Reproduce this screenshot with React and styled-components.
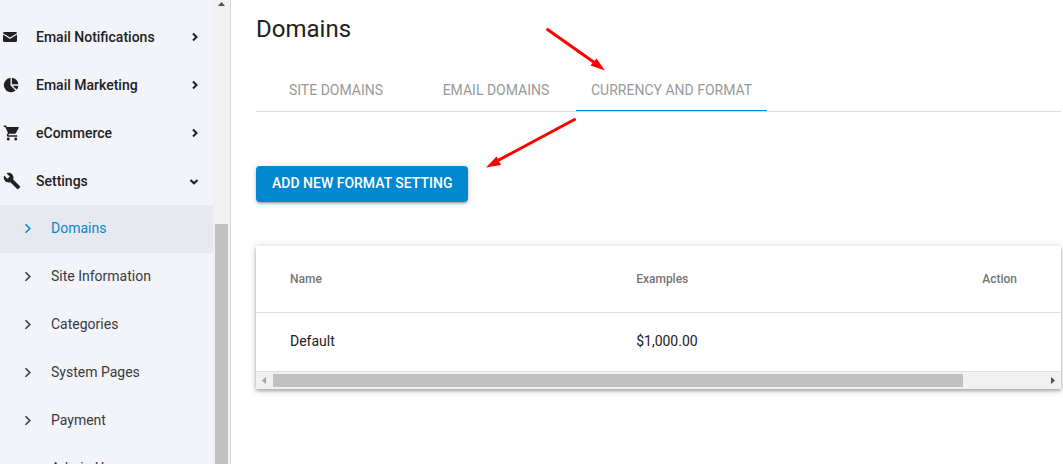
import React from "react";
import styled, { createGlobalStyle } from "styled-components";
import { MdShoppingCart, MdBuild } from "react-icons/md";

const menu = [
  { label: "Email Notifications", icon: "mail" },
  { label: "Email Marketing", icon: "pie" },
  { label: "eCommerce", icon: "cart" },
  { label: "Settings", icon: "wrench", open: true },
];

const settingsMenu = [
  "Domains",
  "Site Information",
  "Categories",
  "System Pages",
  "Payment",
  "Admin Users",
];

const tabs = ["Site Domains", "Email Domains", "Currency and Format"];

const formats = [{ name: "Default", example: "$1,000.00" }];

const MenuIcon = ({ name }) => {
  if (name === "cart") return <MdShoppingCart size={18} />;
  if (name === "wrench") return <MdBuild size={18} />;
  if (name === "mail")
    return (
      <svg width="18" height="18" viewBox="0 0 18 18">
        <path
          d="M1.300 4h11.400Q14 4 14 5.200L7 9.500 0 5.200Q0 4 1.300 4zM0 6.500l7 4.400 7-4.400v6.300q0 1.200-1.300 1.200H1.300Q0 14 0 12.800z"
          fill="currentColor"
        />
      </svg>
    );
  return (
    <svg width="18" height="18" viewBox="0 0 18 18">
      <path
        d="M7.500 1.800A7.200 7.200 0 1 0 12.600 14.600L7.500 9.500zM8.900 1.800V8.300h6.400A7 7 0 0 0 8.900 1.800zM9.700 9.700l4 4a7 7 0 0 0 1.600-4z"
        fill="currentColor"
      />
    </svg>
  );
};

const Chevron = ({ down }) => (
  <svg width="12" height="12" viewBox="0 0 12 12">
    <path
      d={down ? "M2.500 5 6 8.300 9.500 5" : "M5 2.500 8.500 6 5 9.500"}
      fill="none"
      stroke="currentColor"
      strokeWidth="2.100"
    />
  </svg>
);

const SubChevron = () => (
  <svg width="12" height="12" viewBox="0 0 12 12">
    <path
      d="M3.500 2.200 7.800 6.500 3.500 10.800"
      fill="none"
      stroke="currentColor"
      strokeWidth="1.600"
    />
  </svg>
);

const App = () => {
  return (
    <>
      <GlobalStyle />
      <Page>
        <Sidebar>
          <Menu>
            {menu.map((item) => (
              <MenuLink href="#" key={item.label}>
                <MenuIcon name={item.icon} />
                <span>{item.label}</span>
                <Chevron down={item.open} />
              </MenuLink>
            ))}
            {settingsMenu.map((label, index) => (
              <SubLink href="#" key={label} $active={index === 0}>
                <SubChevron />
                <span>{label}</span>
              </SubLink>
            ))}
          </Menu>
          <SideScroll aria-hidden="true">
            <svg width="17" height="12" viewBox="0 0 17 12">
              <path d="M5 6h7L8.500 2z" fill="#505050" />
            </svg>
            <SideThumb />
          </SideScroll>
        </Sidebar>

        <Main>
          <Title>Domains</Title>
          <Tabs role="tablist">
            {tabs.map((tab, index) => (
              <Tab
                key={tab}
                type="button"
                role="tab"
                aria-selected={index === 2}
                $active={index === 2}
              >
                {tab}
              </Tab>
            ))}
          </Tabs>
          <AddButton type="button">Add new format setting</AddButton>
          <Card>
            <Table>
              <colgroup>
                <col width="43%" />
                <col width="43%" />
                <col />
              </colgroup>
              <thead>
                <tr>
                  <th>Name</th>
                  <th>Examples</th>
                  <th>Action</th>
                </tr>
              </thead>
              <tbody>
                {formats.map((format) => (
                  <tr key={format.name}>
                    <td>{format.name}</td>
                    <td>{format.example}</td>
                    <td />
                  </tr>
                ))}
              </tbody>
            </Table>
            <CardScroll aria-hidden="true">
              <svg width="17" height="17" viewBox="0 0 17 17">
                <path d="M10 5v7L6 8.500z" fill="#a3a3a3" />
              </svg>
              <CardTrack>
                <CardThumb />
              </CardTrack>
              <svg width="17" height="17" viewBox="0 0 17 17">
                <path d="M7 5v7l4-3.500z" fill="#505050" />
              </svg>
            </CardScroll>
          </Card>
        </Main>

        <Markers width="130" height="150" viewBox="480 20 130 150" aria-hidden="true">
          <g stroke="#ff0000" strokeWidth="3" strokeLinecap="round">
            <path d="M547.500 29.500 595 63" />
            <path d="M574.500 119.500 497 161" />
          </g>
          <path d="M605 70.500 590.500 65.500 596.500 58.500z" fill="#ff0000" />
          <path d="M486 167.500 496.500 156.500 501 165z" fill="#ff0000" />
        </Markers>
      </Page>
    </>
  );
};

export default App;

const GlobalStyle = createGlobalStyle`
  * {
    box-sizing: border-box;
  }

  body {
    margin: 0;
    background: #fff;
    color: #212121;
    font-family: Roboto, "Liberation Sans", sans-serif;
    font-size: 14px;
  }
`;

const Page = styled.div`
  position: relative;
  display: flex;
  height: 100vh;
  overflow: hidden;
`;

const Sidebar = styled.aside`
  display: flex;
  flex: none;
  width: 231px;
  background: #f3f4f9;
  border-right: 1px solid #d3d3dc;
`;

const Menu = styled.nav`
  flex: 1;
  padding-top: 13px;
`;

const MenuLink = styled.a`
  display: flex;
  align-items: center;
  height: 48px;
  padding: 0 13px 0 3px;
  color: #212121;
  font-weight: 500;
  text-decoration: none;

  span {
    flex: 1;
    margin-left: 15px;
  }
`;

const SubLink = styled(MenuLink)`
  padding: 0 13px 2px 22px;
  font-weight: 400;
  color: ${({ $active }) => ($active ? "#0288d1" : "#3a3a3c")};
  background: ${({ $active }) => ($active ? "#e8e9ee" : "transparent")};

  span {
    margin-left: 17px;
  }
`;

const SideScroll = styled.div`
  display: flex;
  flex-direction: column;
  width: 17px;
  background: #f1f1f1;
`;

const SideThumb = styled.div`
  flex: 1;
  margin: 212px 2px 0;
  background: #c1c1c1;
`;

const Main = styled.main`
  flex: 1;
  min-width: 0;
  padding: 12px 2px 24px 25px;
`;

const Title = styled.h1`
  margin: 0;
  font-size: 24px;
  font-weight: 400;
  line-height: 34px;
`;

const Tabs = styled.div`
  display: flex;
  height: 48px;
  margin: 18px 0 54px;
  border-bottom: 1px solid #dcdcdc;
`;

const Tab = styled.button`
  min-width: 160px;
  padding: 5px 15px 0;
  border: 0;
  border-bottom: 1px solid
    ${({ $active }) => ($active ? "#0288d1" : "transparent")};
  background: none;
  color: #999;
  font: inherit;
  text-transform: uppercase;
`;

const AddButton = styled.button`
  display: block;
  height: 36px;
  padding: 0 16px 2px;
  border: 0;
  border-radius: 4px;
  background: #0288d1;
  color: #fff;
  font: inherit;
  font-weight: 500;
  text-transform: uppercase;
  box-shadow: 0 1px 5px rgba(0, 0, 0, 0.2), 0 2px 2px rgba(0, 0, 0, 0.14),
    0 3px 1px -2px rgba(0, 0, 0, 0.12);
`;

const Card = styled.section`
  margin-top: 44px;
  background: #fff;
  box-shadow: 0 1px 8px rgba(0, 0, 0, 0.2), 0 2px 3px rgba(0, 0, 0, 0.24);
`;

const Table = styled.table`
  width: 100%;
  table-layout: fixed;
  border-collapse: separate;
  border-spacing: 0;

  th,
  td {
    padding: 0 0 0 34px;
    border-bottom: 1px solid #e0e0e0;
    text-align: left;
  }

  th {
    height: 67px;
    color: #757575;
    font-size: 12px;
    font-weight: 500;
  }

  td {
    height: 59px;
    padding-bottom: 2px;
  }
`;

const CardScroll = styled.div`
  display: flex;
  height: 17px;
  background: #f1f1f1;
`;

const CardTrack = styled.div`
  flex: 1;
  padding: 2px 0;
`;

const CardThumb = styled.div`
  width: 89.500%;
  height: 13px;
  background: #c1c1c1;
`;

const Markers = styled.svg`
  position: absolute;
  top: 20px;
  left: 480px;
  pointer-events: none;
`;
